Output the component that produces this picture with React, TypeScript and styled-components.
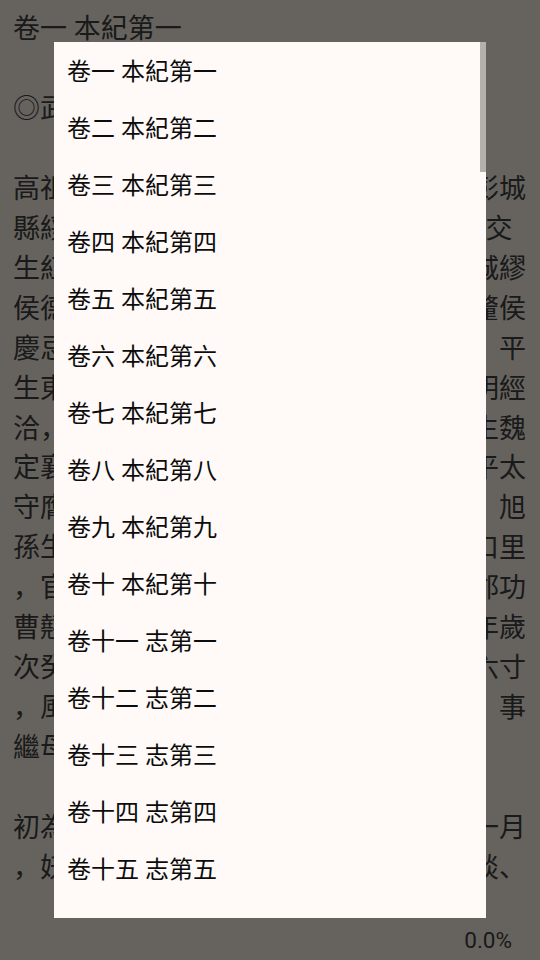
import React from "react";
import styled, { createGlobalStyle } from "styled-components";

const GlobalStyle = createGlobalStyle`
  html, body {
    margin: 0;
    padding: 0;
    background: #fff8ee;
  }
  * { box-sizing: border-box; }
`;

const FONT = `Roboto, "Noto Sans CJK SC", "Noto Sans CJK TC", sans-serif`;

const Reader = styled.div`
  height: 960px;
  display: flex;
  flex-direction: column;
  font-family: ${FONT};
  color: #424242;
  background: #fff8ee;
`;

const Content = styled.main`
  padding: 10px 0 0 13px;
  height: 889px;
  overflow: hidden;
  font-size: 27px;
  line-height: 39.95px;
`;

const Block = styled.section`
  margin: 0 0 39.95px;
`;

const Line = styled.div`
  white-space: pre;
`;

const Footer = styled.footer`
  margin-top: auto;
  height: 40px;
  line-height: 40px;
  padding-right: 28px;
  text-align: right;
  font-size: 22.5px;
`;

const Overlay = styled.div`
  position: fixed;
  inset: 0;
  background: rgba(0, 0, 0, 0.6);
  display: flex;
  align-items: center;
  justify-content: center;
`;

const Dialog = styled.div`
  position: relative;
  width: 432px;
  height: 876px;
  background: #fffaf8;
  padding-bottom: 21px;
  display: flex;
  flex-direction: column;
`;

const List = styled.ul`
  margin: 0;
  padding: 0;
  list-style: none;
  height: 855px;
  overflow-y: auto;
  scrollbar-width: none;
  &::-webkit-scrollbar {
    display: none;
  }
`;

const ScrollThumb = styled.div`
  position: absolute;
  top: 0;
  right: 0;
  width: 6px;
  height: 130px;
  background: #b3b0ae;
`;

const Item = styled.li`
  height: 57px;
  padding-top: 4px;
  line-height: 53px;
  padding-left: 13px;
  font-family: ${FONT};
  font-size: 24px;
  color: #0c0c0c;
  white-space: nowrap;
`;

const digits = ["", "一", "二", "三", "四", "五", "六", "七", "八", "九"];
function cn(n: number): string {
  if (n === 100) return "一百";
  if (n < 10) return digits[n];
  if (n < 20) return "十" + digits[n % 10];
  return digits[Math.floor(n / 10)] + "十" + digits[n % 10];
}

const chapters = Array.from({ length: 100 }, (_, i) => {
  const n = i + 1;
  if (n <= 10) return `卷${cn(n)} 本紀第${cn(n)}`;
  if (n <= 40) return `卷${cn(n)} 志第${cn(n - 10)}`;
  return `卷${cn(n)} 列傳第${cn(n - 40)}`;
});

const blocks: string[][] = [
  ["卷一 本紀第一"],
  ["◎武帝上"],
  [
    "高祖武皇帝諱裕，字德輿，小名寄奴，彭城",
    "縣綏輿里人，漢楚元王交之後也。　　　交",
    "生紅懿侯富，富生宗正辟彊，辟彊生陽城繆",
    "侯德，德生陽城節侯安民，安民生陽城釐侯",
    "慶忌，慶忌生陽城肅侯岑，岑生宗正平，平",
    "生東武城令某，某生東萊太守景，景生明經",
    "洽，洽生博士弘，弘生瑯邪都尉悝，悝生魏",
    "定襄太守某，某生邪城令亮，亮生晉北平太",
    "守膺，膺生相國掾熙，熙生開封令旭孫，旭",
    "孫生混，始過江，居晉陵郡丹徒縣之京口里",
    "，官至武原令。混生東安太守靖，靖生郡功",
    "曹翹，是為皇考。高祖以晉哀帝興寧元年歲",
    "次癸亥三月壬寅夜生。及長，身長七尺六寸",
    "，風骨奇特，家貧，有大志，不治廉隅。事",
    "繼母以孝謹稱。",
  ],
  [
    "初為冠軍孫無終司馬。安帝隆安三年十一月",
    "，妖賊孫恩作亂於會稽，晉朝衞將軍謝琰、",
    "前將軍劉牢之東討。",
  ],
];

export default function App() {
  return (
    <>
      <GlobalStyle />
      <Reader>
        <Content>
          {blocks.map((b, i) => (
            <Block key={i}>
              {b.map((l, j) => (
                <Line key={j}>{l}</Line>
              ))}
            </Block>
          ))}
        </Content>
        <Footer>0.0%</Footer>
      </Reader>
      <Overlay>
        <Dialog>
          <List>
            {chapters.map((c) => (
              <Item key={c}>{c}</Item>
            ))}
          </List>
          <ScrollThumb />
        </Dialog>
      </Overlay>
    </>
  );
}
